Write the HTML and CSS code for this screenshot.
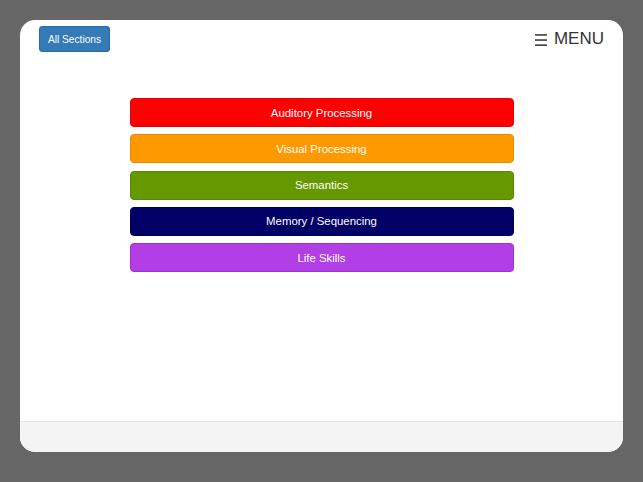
FILE: index.html
```html
<!DOCTYPE html>
<html lang="en">
<head>
<meta charset="utf-8">
<title>Sections</title>
<link rel="stylesheet" href="styles.css">
</head>
<body>
<div class="card">
  <div class="topbar">
    <button class="btn-sections">All Sections</button>
    <div class="menu">
      <svg class="menu-icon" width="12" height="12" viewBox="0 0 12 12" aria-hidden="true">
        <rect x="0" y="0.2" width="12" height="1.5" fill="#333"/>
        <rect x="0" y="5.3" width="12" height="1.5" fill="#333"/>
        <rect x="0" y="10.4" width="12" height="1.5" fill="#333"/>
      </svg>
      <span>MENU</span>
    </div>
  </div>
  <div class="main">
    <a class="bar bar-red">Auditory Processing</a>
    <a class="bar bar-orange">Visual Processing</a>
    <a class="bar bar-green">Semantics</a>
    <a class="bar bar-navy">Memory / Sequencing</a>
    <a class="bar bar-purple">Life Skills</a>
  </div>
  <div class="footer"></div>
</div>
</body>
</html>
```

FILE: styles.css
```css
html, body {
  margin: 0;
  padding: 0;
  background: #666666;
  font-family: "Liberation Sans", Arial, sans-serif;
}
.card {
  margin: 20px 20px 0 20px;
  height: 432px;
  background: #ffffff;
  border-radius: 15px;
  display: flex;
  flex-direction: column;
  overflow: hidden;
}
.topbar {
  display: flex;
  justify-content: space-between;
  align-items: flex-start;
  padding: 6px 19px 0 19px;
}
.btn-sections {
  width: 71px;
  height: 26px;
  background: #337ab7;
  color: #ffffff;
  border: 1px solid #2e6da4;
  border-radius: 3px;
  font-family: "Liberation Sans", Arial, sans-serif;
  font-size: 10.2px;
  padding: 0;
}
.menu {
  margin-top: 3px;
  display: flex;
  align-items: center;
  gap: 7px;
  font-size: 17px;
  line-height: 20px;
  color: #333333;
}
.menu-icon {
  display: block;
  margin-top: 1px;
}
.main {
  flex: 1;
  display: flex;
  flex-direction: column;
  align-items: center;
  gap: 7.3px;
  padding-top: 46px;
}
.bar {
  box-sizing: border-box;
  width: 384px;
  height: 29px;
  display: flex;
  align-items: center;
  justify-content: center;
  color: #ffffff;
  font-size: 11.4px;
  border-radius: 4px;
  border: 1px solid transparent;
}
.bar-red { background: #ff0000; border-color: #e60000; }
.bar-orange { background: #ff9900; border-color: #e68a00; }
.bar-green { background: #669900; border-color: #5a8700; }
.bar-navy { background: #000066; border-color: #00004d; }
.bar-purple { background: #b23ee6; border-color: #a030d0; }
.footer {
  height: 30px;
  border-top: 1px solid #e6e6e6;
  background: #f4f4f4;
}
```
